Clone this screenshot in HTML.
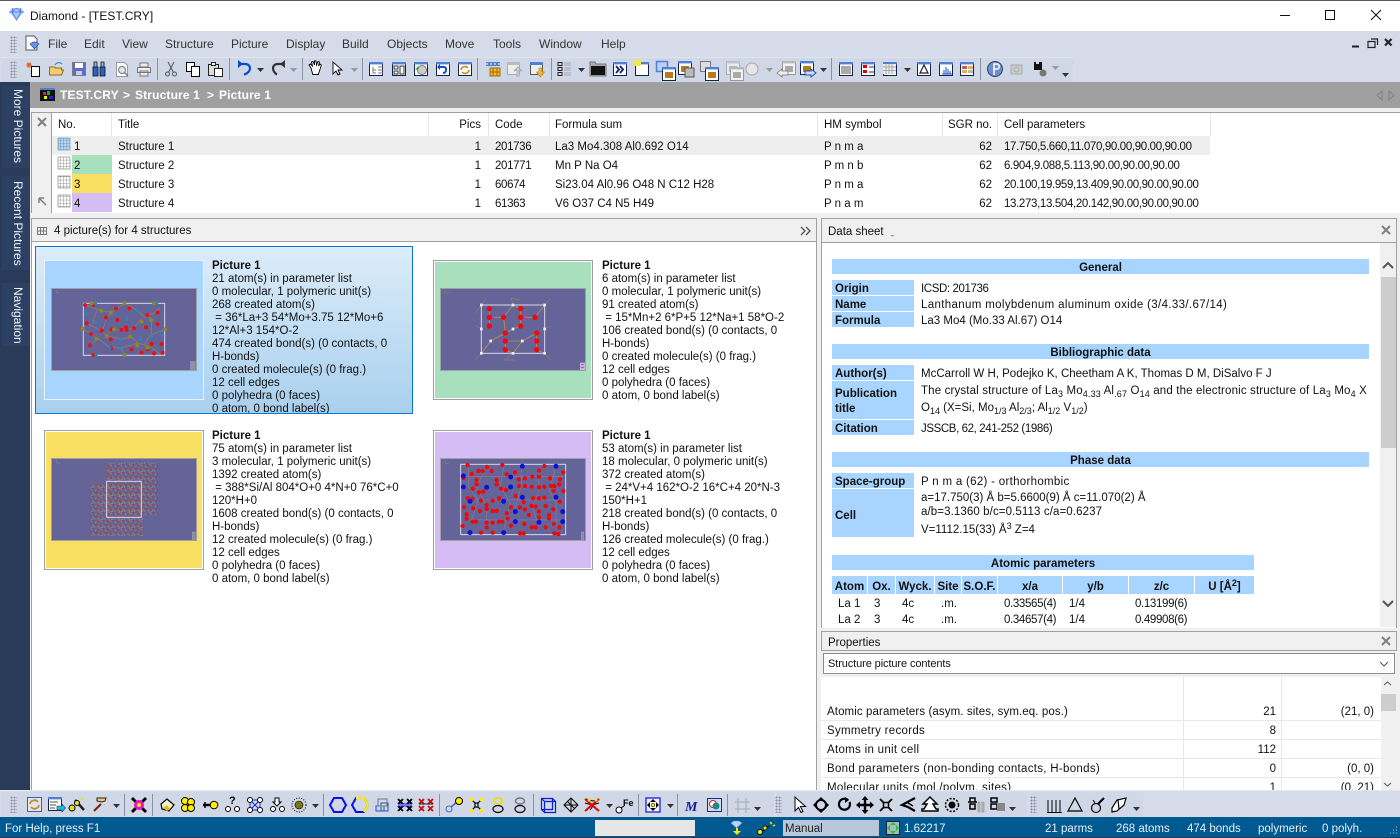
<!DOCTYPE html>
<html><head><meta charset="utf-8"><title>Diamond - [TEST.CRY]</title>
<style>
html,body{margin:0;padding:0;width:1400px;height:838px;overflow:hidden;background:#f0f0f0}
body{position:relative;font-family:"Liberation Sans",sans-serif;font-size:11.5px;color:#111}
div{position:absolute;box-sizing:border-box}
.t{white-space:pre;line-height:16px;height:16px}
.r{text-align:right}
.c{text-align:center}
.b{font-weight:bold}
.m{color:#333;font-size:12px}
.pb{color:#fff;font-size:12px;font-weight:bold;letter-spacing:.15px}
.n{letter-spacing:-.35px}
.h{background:#a8d5ff;font-weight:bold;text-align:center;line-height:18px;height:15px;white-space:pre}
.a{height:18px;line-height:22px}
.l{background:#a8d5ff;font-weight:bold;padding-left:3px;line-height:18px;height:15px;left:832px;width:82px;white-space:pre}
.d{white-space:pre;line-height:13px;padding-top:1px}
sub{font-size:9px;line-height:0;vertical-align:-3px}
sup{font-size:9px;line-height:0;vertical-align:4px}
.s{color:#e8eef5;top:821px}
.p{background:#c0c0c0}
.grip{background-image:radial-gradient(#8a8fa0 .8px,transparent .9px);background-size:3px 3px;width:7px}
svg{position:absolute;left:0;top:0;z-index:5}
</style></head><body>

<!-- title bar -->
<div style="left:0;top:0;width:1400px;height:31px;background:#fff;border-top:1px solid #5a5a5a"></div>
<div class="t" style="left:30px;top:8px;font-size:12px">Diamond - [TEST.CRY]</div>

<!-- menu + toolbar -->
<div style="left:0;top:31px;width:1400px;height:51px;background:#d5dbe9"></div>
<div style="left:2px;top:57px;width:1071px;height:25px;background:#d0d7e7;border-top:1px solid #dfe4ef"></div>
<div class="grip" style="left:10px;top:36px;height:17px"></div>
<div class="grip" style="left:10px;top:61px;height:17px"></div>
<div class="t m" style="left:48px;top:36px">File</div>
<div class="t m" style="left:84px;top:36px">Edit</div>
<div class="t m" style="left:122px;top:36px">View</div>
<div class="t m" style="left:165px;top:36px">Structure</div>
<div class="t m" style="left:231px;top:36px">Picture</div>
<div class="t m" style="left:286px;top:36px">Display</div>
<div class="t m" style="left:342px;top:36px">Build</div>
<div class="t m" style="left:387px;top:36px">Objects</div>
<div class="t m" style="left:445px;top:36px">Move</div>
<div class="t m" style="left:493px;top:36px">Tools</div>
<div class="t m" style="left:539px;top:36px">Window</div>
<div class="t m" style="left:601px;top:36px">Help</div>

<!-- path bar -->
<div style="left:30px;top:82px;width:1370px;height:26px;background:#a0a0a0"></div>
<div class="t pb" style="left:60px;top:87px">TEST.CRY</div>
<div class="t pb" style="left:123px;top:87px">&gt;</div>
<div class="t pb" style="left:135px;top:87px">Structure 1</div>
<div class="t pb" style="left:207px;top:87px">&gt;</div>
<div class="t pb" style="left:219px;top:87px">Picture 1</div>

<!-- left strip -->
<div style="left:0;top:82px;width:30px;height:709px;background:#293b58"></div>
<div style="left:2px;top:86px;width:28px;height:82px;background:#2c4063"></div>
<div style="left:2px;top:176px;width:28px;height:94px;background:#2c4063"></div>
<div style="left:2px;top:283px;width:28px;height:63px;background:#2c4063"></div>
<div style="left:11px;top:89px;width:14px;height:76px;writing-mode:vertical-rl;color:#f0f3f8;white-space:pre;line-height:14px;font-size:12px">More Pictures</div>
<div style="left:11px;top:181px;width:14px;height:88px;writing-mode:vertical-rl;color:#f0f3f8;white-space:pre;line-height:14px;font-size:12px">Recent Pictures</div>
<div style="left:11px;top:287px;width:14px;height:58px;writing-mode:vertical-rl;color:#f0f3f8;white-space:pre;line-height:14px;font-size:12px">Navigation</div>

<!-- structure table -->
<div style="left:31px;top:112px;width:1369px;height:101px;background:#fff;border-top:1px solid #a0a0a0;border-left:1px solid #a0a0a0"></div>
<div style="left:32px;top:113px;width:20px;height:100px;background:#f0f0f0;border-right:1px solid #a0a0a0"></div>
<div style="left:52px;top:136px;width:1158px;height:19px;background:#eee"></div>
<div style="left:72px;top:155px;width:40px;height:19px;background:#a8e0bd"></div>
<div style="left:72px;top:174px;width:40px;height:19px;background:#fae062"></div>
<div style="left:72px;top:193px;width:40px;height:19px;background:#d6bcf5"></div>
<div style="left:111px;top:113px;width:1px;height:23px;background:#e6e6e6"></div>
<div style="left:428px;top:113px;width:1px;height:23px;background:#e6e6e6"></div>
<div style="left:488px;top:113px;width:1px;height:23px;background:#e6e6e6"></div>
<div style="left:549px;top:113px;width:1px;height:23px;background:#e6e6e6"></div>
<div style="left:817px;top:113px;width:1px;height:23px;background:#e6e6e6"></div>
<div style="left:942px;top:113px;width:1px;height:23px;background:#e6e6e6"></div>
<div style="left:997px;top:113px;width:1px;height:23px;background:#e6e6e6"></div>
<div style="left:1210px;top:113px;width:1px;height:23px;background:#e6e6e6"></div>
<div class="t" style="left:58px;top:117px">No.</div>
<div class="t" style="left:118px;top:117px">Title</div>
<div class="t r" style="left:440px;top:117px;width:41px">Pics</div>
<div class="t" style="left:495px;top:117px">Code</div>
<div class="t" style="left:555px;top:117px">Formula sum</div>
<div class="t" style="left:824px;top:117px">HM symbol</div>
<div class="t" style="left:948px;top:117px">SGR no.</div>
<div class="t" style="left:1004px;top:117px">Cell parameters</div>

<div class="t" style="left:74px;top:139px">1</div><div class="t" style="left:118px;top:139px">Structure 1</div><div class="t r" style="left:450px;top:139px;width:31px">1</div><div class="t n" style="left:495px;top:139px">201736</div><div class="t" style="left:555px;top:139px">La3 Mo4.308 Al0.692 O14</div><div class="t" style="left:824px;top:139px">P n m a</div><div class="t r" style="left:960px;top:139px;width:32px">62</div><div class="t n" style="left:1004px;top:139px">17.750,5.660,11.070,90.00,90.00,90.00</div>
<div class="t" style="left:74px;top:158px">2</div><div class="t" style="left:118px;top:158px">Structure 2</div><div class="t r" style="left:450px;top:158px;width:31px">1</div><div class="t n" style="left:495px;top:158px">201771</div><div class="t" style="left:555px;top:158px">Mn P Na O4</div><div class="t" style="left:824px;top:158px">P m n b</div><div class="t r" style="left:960px;top:158px;width:32px">62</div><div class="t n" style="left:1004px;top:158px">6.904,9.088,5.113,90.00,90.00,90.00</div>
<div class="t" style="left:74px;top:177px">3</div><div class="t" style="left:118px;top:177px">Structure 3</div><div class="t r" style="left:450px;top:177px;width:31px">1</div><div class="t n" style="left:495px;top:177px">60674</div><div class="t" style="left:555px;top:177px">Si23.04 Al0.96 O48 N C12 H28</div><div class="t" style="left:824px;top:177px">P n m a</div><div class="t r" style="left:960px;top:177px;width:32px">62</div><div class="t n" style="left:1004px;top:177px">20.100,19.959,13.409,90.00,90.00,90.00</div>
<div class="t" style="left:74px;top:196px">4</div><div class="t" style="left:118px;top:196px">Structure 4</div><div class="t r" style="left:450px;top:196px;width:31px">1</div><div class="t n" style="left:495px;top:196px">61363</div><div class="t" style="left:555px;top:196px">V6 O37 C4 N5 H49</div><div class="t" style="left:824px;top:196px">P n a m</div><div class="t r" style="left:960px;top:196px;width:32px">62</div><div class="t n" style="left:1004px;top:196px">13.273,13.504,20.142,90.00,90.00,90.00</div>

<!-- pictures panel -->
<div style="left:31px;top:218px;width:786px;height:24px;background:#f0f0f0;border:1px solid #a0a0a0"></div>
<div class="t" style="left:54px;top:223px">4 picture(s) for 4 structures</div>
<div style="left:31px;top:242px;width:786px;height:549px;background:#fff;border-left:1px solid #a0a0a0;border-right:1px solid #a0a0a0"></div>

<div style="left:35px;top:246px;width:378px;height:168px;background:linear-gradient(#dcecf9,#a9d0ee);border:1px solid #0a78d2"></div>
<div style="left:44px;top:260px;width:160px;height:140px;background:#a8d5ff;border:1px solid #eaf2fa"></div>
<div style="left:433px;top:260px;width:160px;height:140px;background:#a8e0bd;border:1px solid #a0a0a0;outline:1px solid #fff;outline-offset:-2px"></div>
<div style="left:44px;top:430px;width:160px;height:140px;background:#fae062;border:1px solid #a0a0a0;outline:1px solid #fff;outline-offset:-2px"></div>
<div style="left:433px;top:430px;width:160px;height:140px;background:#d6bcf5;border:1px solid #a0a0a0;outline:1px solid #fff;outline-offset:-2px"></div>
<div style="left:51px;top:288px;width:146px;height:83px;background:#656498;border:1px solid #a0a0a0"></div>
<div style="left:440px;top:288px;width:146px;height:83px;background:#656498;border:1px solid #a0a0a0"></div>
<div style="left:51px;top:458px;width:146px;height:83px;background:#656498;border:1px solid #a0a0a0"></div>
<div style="left:440px;top:458px;width:146px;height:83px;background:#656498;border:1px solid #a0a0a0"></div>

<div class="d" style="left:212px;top:259px;height:154px;overflow:hidden"><b>Picture 1</b>
21 atom(s) in parameter list
0 molecular, 1 polymeric unit(s)
268 created atom(s)
 = 36*La+3 54*Mo+3.75 12*Mo+6
12*Al+3 154*O-2
474 created bond(s) (0 contacts, 0
H-bonds)
0 created molecule(s) (0 frag.)
12 cell edges
0 polyhedra (0 faces)
0 atom, 0 bond label(s)</div>
<div class="d" style="left:602px;top:259px"><b>Picture 1</b>
6 atom(s) in parameter list
0 molecular, 1 polymeric unit(s)
91 created atom(s)
 = 15*Mn+2 6*P+5 12*Na+1 58*O-2
106 created bond(s) (0 contacts, 0
H-bonds)
0 created molecule(s) (0 frag.)
12 cell edges
0 polyhedra (0 faces)
0 atom, 0 bond label(s)</div>
<div class="d" style="left:212px;top:429px"><b>Picture 1</b>
75 atom(s) in parameter list
3 molecular, 1 polymeric unit(s)
1392 created atom(s)
 = 388*Si/Al 804*O+0 4*N+0 76*C+0
120*H+0
1608 created bond(s) (0 contacts, 0
H-bonds)
12 created molecule(s) (0 frag.)
12 cell edges
0 polyhedra (0 faces)
0 atom, 0 bond label(s)</div>
<div class="d" style="left:602px;top:429px"><b>Picture 1</b>
53 atom(s) in parameter list
18 molecular, 0 polymeric unit(s)
372 created atom(s)
 = 24*V+4 162*O-2 16*C+4 20*N-3
150*H+1
218 created bond(s) (0 contacts, 0
H-bonds)
126 created molecule(s) (0 frag.)
12 cell edges
0 polyhedra (0 faces)
0 atom, 0 bond label(s)</div>

<!-- data sheet -->
<div style="left:821px;top:218px;width:576px;height:410px;background:#fff;border:1px solid #a0a0a0;border-bottom:0"></div>
<div style="left:821px;top:218px;width:576px;height:25px;background:#f0f0f0;border:1px solid #a0a0a0"></div>
<div class="t" style="left:828px;top:224px">Data sheet</div>
<div class="h" style="left:832px;top:259px;width:537px">General</div>
<div class="l" style="top:280px">Origin</div><div class="t" style="left:921px;top:281px;letter-spacing:-.4px">ICSD: 201736</div>
<div class="l" style="top:296px">Name</div><div class="t" style="left:921px;top:297px;letter-spacing:.35px">Lanthanum molybdenum aluminum oxide (3/4.33/.67/14)</div>
<div class="l" style="top:312px">Formula</div><div class="t" style="left:921px;top:313px">La3 Mo4 (Mo.33 Al.67) O14</div>
<div class="h" style="left:832px;top:344px;width:537px">Bibliographic data</div>
<div class="l" style="top:365px">Author(s)</div><div class="t" style="left:921px;top:366px">McCarroll W H, Podejko K, Cheetham A K, Thomas D M, DiSalvo F J</div>
<div class="l" style="top:381px;height:38px;line-height:15px;padding-top:6px">Publication
title</div>
<div class="t" style="left:921px;top:383px;letter-spacing:.15px">The crystal structure of La<sub>3</sub> Mo<sub>4.33</sub> Al<sub>.67</sub> O<sub>14</sub> and the electronic structure of La<sub>3</sub> Mo<sub>4</sub> X</div>
<div class="t" style="left:921px;top:400px">O<sub>14</sub> (X=Si, Mo<sub>1/3</sub> Al<sub>2/3</sub>; Al<sub>1/2</sub> V<sub>1/2</sub>)</div>
<div class="l" style="top:420px">Citation</div><div class="t" style="left:921px;top:421px;letter-spacing:-.4px">JSSCB, 62, 241-252 (1986)</div>
<div class="h" style="left:832px;top:452px;width:537px">Phase data</div>
<div class="l" style="top:473px">Space-group</div><div class="t" style="left:921px;top:474px;letter-spacing:.3px">P n m a (62) - orthorhombic</div>
<div class="l" style="top:489px;height:48px;line-height:54px">Cell</div>
<div class="t" style="left:921px;top:490px">a=17.750(3) Å b=5.6600(9) Å c=11.070(2) Å</div>
<div class="t" style="left:921px;top:504px;letter-spacing:.1px">a/b=3.1360 b/c=0.5113 c/a=0.6237</div>
<div class="t" style="left:921px;top:522px">V=1112.15(33) Å<sup>3</sup> Z=4</div>
<div class="h" style="left:832px;top:555px;width:422px">Atomic parameters</div>
<div class="h a" style="left:832px;top:576px;width:35px">Atom</div>
<div class="h a" style="left:868px;top:576px;width:27px">Ox.</div>
<div class="h a" style="left:896px;top:576px;width:38px">Wyck.</div>
<div class="h a" style="left:935px;top:576px;width:26px">Site</div>
<div class="h a" style="left:962px;top:576px;width:35px">S.O.F.</div>
<div class="h a" style="left:998px;top:576px;width:64px">x/a</div>
<div class="h a" style="left:1063px;top:576px;width:65px">y/b</div>
<div class="h a" style="left:1129px;top:576px;width:65px">z/c</div>
<div class="h a" style="left:1195px;top:576px;width:59px">U [Å<sup>2</sup>]</div>
<div class="t" style="left:838px;top:596px">La 1</div><div class="t" style="left:874px;top:596px">3</div><div class="t" style="left:902px;top:596px">4c</div><div class="t" style="left:941px;top:596px">.m.</div><div class="t n" style="left:1004px;top:596px">0.33565(4)</div><div class="t" style="left:1069px;top:596px">1/4</div><div class="t n" style="left:1135px;top:596px">0.13199(6)</div>
<div class="t" style="left:838px;top:612px">La 2</div><div class="t" style="left:874px;top:612px">3</div><div class="t" style="left:902px;top:612px">4c</div><div class="t" style="left:941px;top:612px">.m.</div><div class="t n" style="left:1004px;top:612px">0.34657(4)</div><div class="t" style="left:1069px;top:612px">1/4</div><div class="t n" style="left:1135px;top:612px">0.49908(6)</div>
<div style="left:1380px;top:243px;width:16px;height:384px;background:#f0f0f0"></div>
<div style="left:1381px;top:277px;width:15px;height:171px;background:#cdcdcd"></div>

<!-- properties -->
<div style="left:821px;top:628px;width:579px;height:163px;background:#f0f0f0"></div>
<div style="left:821px;top:631px;width:576px;height:20px;background:#f0f0f0;border:1px solid #a0a0a0"></div>
<div class="t" style="left:828px;top:635px">Properties</div>
<div style="left:823px;top:653px;width:572px;height:21px;background:#fff;border:1px solid #8c8c8c"></div>
<div class="t" style="left:828px;top:656px;font-size:11px;letter-spacing:-.1px">Structure picture contents</div>
<div style="left:821px;top:677px;width:560px;height:113px;background:#fff;overflow:hidden">
<div style="left:362px;top:0;width:1px;height:113px;background:#e8e8e8"></div>
<div style="left:460px;top:0;width:1px;height:113px;background:#e8e8e8"></div>
<div style="left:0;top:43px;width:560px;height:1px;background:#e8e8e8"></div>
<div style="left:0;top:62px;width:560px;height:1px;background:#e8e8e8"></div>
<div style="left:0;top:81px;width:560px;height:1px;background:#e8e8e8"></div>
<div style="left:0;top:100px;width:560px;height:1px;background:#e8e8e8"></div>
<div class="t" style="left:6px;top:27px;letter-spacing:.1px">Atomic parameters (asym. sites, sym.eq. pos.)</div><div class="t r" style="left:400px;top:27px;width:55px">21</div><div class="t r" style="left:498px;top:27px;width:55px">(21, 0)</div>
<div class="t" style="left:6px;top:46px;letter-spacing:.3px">Symmetry records</div><div class="t r" style="left:400px;top:46px;width:55px">8</div>
<div class="t" style="left:6px;top:65px;letter-spacing:.3px">Atoms in unit cell</div><div class="t r" style="left:400px;top:65px;width:55px">112</div>
<div class="t" style="left:6px;top:84px;letter-spacing:.3px">Bond parameters (non-bonding contacts, H-bonds)</div><div class="t r" style="left:400px;top:84px;width:55px">0</div><div class="t r" style="left:498px;top:84px;width:55px">(0, 0)</div>
<div class="t" style="left:6px;top:103px;letter-spacing:.3px">Molecular units (mol./polym. sites)</div><div class="t r" style="left:400px;top:103px;width:55px">1</div><div class="t r" style="left:498px;top:103px;width:55px">(0, 21)</div>
</div>
<div style="left:1381px;top:677px;width:15px;height:113px;background:#f0f0f0"></div>
<div style="left:1381px;top:694px;width:15px;height:17px;background:#cdcdcd"></div>

<!-- bottom toolbars -->
<div style="left:0;top:790px;width:1400px;height:27px;background:#d5dbe9;border-top:1px solid #e4e8f0"></div>
<div style="left:2px;top:792px;width:772px;height:25px;background:#d0d7e7"></div>
<div style="left:777px;top:792px;width:250px;height:25px;background:#d0d7e7"></div>
<div style="left:1030px;top:792px;width:113px;height:25px;background:#d0d7e7"></div>
<div class="grip" style="left:10px;top:796px;height:17px"></div>
<div class="grip" style="left:775px;top:796px;height:17px"></div>
<div class="grip" style="left:1030px;top:796px;height:17px"></div>

<!-- status bar -->
<div style="left:0;top:817px;width:1400px;height:21px;background:#005a92;border-bottom:1px solid #2a3a4a"></div>
<div class="t s" style="left:5px">For Help, press F1</div>
<div style="left:595px;top:820px;width:100px;height:16px;background:#e6e6e6"></div>
<div style="left:783px;top:820px;width:96px;height:16px;background:#b9c7da"></div>
<div class="t" style="left:785px;top:821px;color:#222">Manual</div>
<div class="t s" style="left:904px">1.62217</div>
<div class="t s" style="left:1045px">21 parms</div>
<div class="t s" style="left:1116px">268 atoms</div>
<div class="t s" style="left:1187px">474 bonds</div>
<div class="t s" style="left:1258px">polymeric</div>
<div class="t s" style="left:1322px">0 polyh.</div>

<svg width="1400" height="838" viewBox="0 0 1400 838" fill="none">
<defs>
<pattern id="gr" width="3.33" height="3.33" patternUnits="userSpaceOnUse"><path d="M0 0h3.33M0 0v3.33" stroke="#777" stroke-width=".8"/></pattern>
<pattern id="grb" width="3.33" height="3.33" patternUnits="userSpaceOnUse"><path d="M0 0h3.33M0 0v3.33" stroke="#5a86b8" stroke-width=".8"/></pattern>
<pattern id="s3" width="30" height="24" patternUnits="userSpaceOnUse">
<path d="M3 4h0M18 2h0M10 14h0M24 17h0" stroke="#d8281e" stroke-width="4.600" stroke-linecap="round"/>
<path d="M9 5h0M25 7h0M3 16h0M17 19h0" stroke="#989030" stroke-width="4.600" stroke-linecap="round"/>
<path d="M14 9h0M28 12h0M6 10h0" stroke="#c0a48e" stroke-width="3" stroke-linecap="round"/>
</pattern>
<g id="dn"><path d="M0 0h7l-3.500 4z" fill="#333"/></g>
<g id="dg"><path d="M0 0h7l-3.500 4z" fill="#999"/></g>
<g id="win"><rect x="1.500" y="1.500" width="13" height="13" fill="#fff" stroke="#14224e"/><rect x="1" y="1" width="14" height="2.400" fill="#4f80d4"/></g>
<g id="wim"><rect x="1.500" y="1.500" width="13" height="13" fill="#fff" stroke="#14224e"/><rect x="1" y="1" width="14" height="2.400" fill="#4f80d4"/><rect x="4" y="6" width="8" height="6" fill="#b87a20"/></g>
<g id="wgr"><rect x="1.500" y="1.500" width="13" height="13" fill="#f4f4f4" stroke="#999"/><rect x="1" y="1" width="14" height="2.400" fill="#b8b8b8"/><rect x="4" y="6" width="8" height="6" fill="#aaa"/></g>
<g id="yc"><circle cx="4" cy="4" r="3.500" fill="#ffee00" stroke="#000"/></g>
<g id="wc"><circle cx="3" cy="3" r="2.500" fill="#fff" stroke="#000"/></g>
</defs>

<!-- title icon & buttons -->
<path d="M9 12l3-4h9l3 4-7.500 8z" fill="#a9c9f5"/><path d="M9 12h15M13 8l-1 4 4.500 8 4.500-8-1-4M16.500 8l-4.500 4M16.500 8l4.500 4" stroke="#4a72d8" stroke-width=".8"/>
<path d="M1280 15.500h10" stroke="#111"/><rect x="1325.500" y="10.500" width="9" height="9" stroke="#111"/><path d="M1371 10l10 10M1381 10l-10 10" stroke="#111"/>
<path d="M1352 46.500h7" stroke="#222" stroke-width="2"/><path d="M1368 41.500h7v6h-7zM1371 39h6.500v6" stroke="#222" stroke-width="1.200"/><path d="M1385 39l6.500 6.500M1391.500 39l-6.500 6.500" stroke="#222" stroke-width="2.200"/>

<!-- menu doc icon -->
<path d="M26 36h8l3 3v11H26z" fill="#fff" stroke="#555"/><path d="M30 44l3-2h3l3 2-4.500 5z" fill="#6e92e0" stroke="#2b54b8" stroke-width=".7"/>

<!-- row 1 icons -->
<g id="row1">
<g transform="translate(25,61)"><rect x="6.500" y="5.500" width="8" height="10" fill="#fff" stroke="#000"/><path d="M4 1v6M1 4h6M2 2l4 4M6 2L2 6" stroke="#e0601c"/></g>
<g transform="translate(48,61)"><path d="M1.500 14V6h5l1 1h6v2h2l-2 5z" fill="#f3cd6d" stroke="#8c6c24"/><path d="M7 4c2-3 5-3 7-1" stroke="#3b7bd8"/></g>
<g transform="translate(71,61)"><rect x="1.500" y="1.500" width="13" height="13" fill="#5d6cc6" stroke="#7b7b88"/><rect x="4" y="2" width="8" height="5" fill="#fff"/><rect x="5" y="10" width="6" height="4" fill="#c9cce0"/></g>
<g transform="translate(91,61)"><path d="M2 6h5v9H2zM9 6h5v9H9z" fill="#2c62c8" stroke="#111" stroke-width=".8"/><path d="M3 1h3v5H3zM10 1h3v5h-3z" fill="#8cb0e8" stroke="#111" stroke-width=".8"/></g>
<g transform="translate(114,61)"><path d="M2.500 1.500h8l3 3v11h-11z" fill="#fff" stroke="#999"/><circle cx="8" cy="9" r="3.500" fill="#dfe7ee" stroke="#777"/><path d="M10.500 11.500l3.500 3.500" stroke="#777" stroke-width="1.500"/></g>
<g transform="translate(136,61)"><path d="M4 2h8v4H4zM1.500 6.500h13v5h-13zM4 10h8v5H4z" fill="#eee" stroke="#777"/></g>
<path d="M157.500 58v22" stroke="#8a93a6"/>
<g transform="translate(163,61)"><circle cx="4.500" cy="13" r="2" stroke="#555"/><circle cx="11.500" cy="13" r="2" stroke="#555"/><path d="M5.500 11.500L11 1M10.500 11.500L5 1" stroke="#555"/></g>
<g transform="translate(185,61)"><rect x="1.500" y="1.500" width="8" height="9" fill="#fff" stroke="#000"/><rect x="6.500" y="5.500" width="8" height="10" fill="#fff" stroke="#000"/></g>
<g transform="translate(207,61)"><rect x="1.500" y="3.500" width="10" height="11" fill="#ddd" stroke="#222"/><rect x="4.500" y="1.500" width="4" height="3" fill="#fff" stroke="#222"/><rect x="7.500" y="7.500" width="8" height="8" fill="#fff" stroke="#222"/></g>
<path d="M229.500 58v22" stroke="#8a93a6"/>
<path d="M238 64h7c4 0 5 2.500 5 4.500s-2 5-6 6" stroke="#0a4cd0" stroke-width="2.200"/><path d="M238 60v8l5-4z" fill="#0a4cd0"/>
<use href="#dn" x="257" y="68"/>
<path d="M284 64h-6c-4 0-5 2.500-5 4.500s2 5 4 6" stroke="#333" stroke-width="2.200"/><path d="M285 60v8l-5-4z" fill="#333"/>
<use href="#dg" x="290" y="68"/>
<path d="M302.500 58v22" stroke="#8a93a6"/>
<path d="M311 68l-2-3 1.500-1 2 2-1-4 1.500-.5 1.500 3.500V61h1.500l.5 4 1.500-3.500 1.500.5-1 4 1.500-2 1.300 1-1.500 5-1.500 4.500h-5.500z" fill="#fff" stroke="#000" stroke-width=".9"/>
<path d="M333 62v12l3-3 2 4 2-1-2-4h4z" fill="#fff" stroke="#000" stroke-width=".9"/>
<use href="#dg" x="351" y="68"/>
<path d="M362.500 58v22" stroke="#8a93a6"/>
<use href="#win" x="368" y="61"/><path d="M373 67v6h3M373 70h3M378 67h5M378 70h5M378 73h5" stroke="#777"/>
<use href="#win" x="391" y="61"/><path d="M394 66h4v3h-4zM394 71h4v3h-4zM400 66h4v8h-4z" stroke="#333"/>
<use href="#win" x="413" y="61"/><circle cx="422" cy="70" r="4.500" fill="#ccc" stroke="#777"/><path d="M415 70l3-4 1 3z" fill="#2eaa30"/>
<use href="#win" x="435" y="61"/><path d="M439 67h5c3 0 3 6-1 6" stroke="#0a4cd0" stroke-width="2"/><path d="M440 64v6l-3-3z" fill="#0a4cd0"/>
<use href="#win" x="457" y="61"/><path d="M461 70a4 4 0 0 1 7-2M469 70a4 4 0 0 1-7 2" stroke="#c88a20" stroke-width="1.600"/>
<path d="M477.500 58v22" stroke="#8a93a6"/>
<g transform="translate(485,61)"><path d="M1 1h14v4H1z" fill="#4f80d4"/><path d="M1 3h14" stroke="#fff" stroke-dasharray="2 2"/><rect x="5" y="7" width="10" height="8" fill="#f2b92c" stroke="#a06c10"/><path d="M8 7v8M12 7v8M5 11h10" stroke="#a06c10"/></g>
<g transform="translate(506,61)"><rect x="1.500" y="1.500" width="12" height="12" fill="#eee" stroke="#aaa"/><rect x="1" y="1" width="13" height="3" fill="#bbb"/><path d="M11 15V9l-3 1 4-4 4 4-3-1v6z" fill="#ddd" stroke="#aaa"/></g>
<g transform="translate(529,61)"><rect x="1.500" y="1.500" width="12" height="12" fill="#eee" stroke="#555"/><rect x="1" y="1" width="13" height="3" fill="#4f80d4"/><path d="M10 7h3v4h2.500l-4 5-4-5H10z" fill="#f2b92c" stroke="#b98410" stroke-width=".6"/></g>
<path d="M551.500 58v22" stroke="#8a93a6"/>
<path d="M558 62.500h4v3h-4zM558 67.500h4v3h-4zM558 72.500h4v3h-4z" stroke="#222"/><path d="M564 63h7M564 65h7M564 68h7M564 70h7M564 73h7M564 75h7" stroke="#aaa"/>
<use href="#dn" x="578" y="68"/>
<path d="M590 62h5l1 2h10v12h-16z" fill="#aaa" stroke="#777"/><rect x="591" y="66" width="14" height="9" fill="#111"/>
<use href="#win" x="612" y="61"/><path d="M616 66l3 3.500-3 3.500M620 66l3 3.500-3 3.500" stroke="#1a2a6e" stroke-width="2"/>
<use href="#win" x="634" y="61"/><rect x="634" y="60" width="7" height="6" fill="#f2e64e"/>
<rect x="656.500" y="61.500" width="11" height="10" fill="#b8d0f8" stroke="#4f80d4" stroke-width="1.500"/><use href="#wim" x="661" y="66"/>
<use href="#wim" x="677" y="60"/><rect x="685" y="68" width="9" height="9" fill="#bbb" stroke="#555"/>
<rect x="700.500" y="61.500" width="10" height="10" fill="#ddd" stroke="#777"/><use href="#wim" x="704" y="66"/>
<use href="#wgr" x="725" y="60" opacity=".7"/><use href="#wgr" x="729" y="66"/>
<circle cx="752" cy="69" r="6" fill="#e6e6e6" stroke="#aaa"/><use href="#dg" x="766" y="68"/>
<use href="#wgr" x="781" y="60"/><path d="M777 73l5-4v2h6v4h-6v2z" fill="#eee" stroke="#777" stroke-width=".8"/>
<use href="#wim" x="799" y="60"/><path d="M816 73l-5-4v2h-6v4h6v2z" fill="#cfe0fa" stroke="#1a4cc0"/>
<use href="#dn" x="820" y="68"/>
<path d="M831.500 58v22" stroke="#8a93a6"/>
<use href="#win" x="838" y="61"/><path d="M841 67h10M841 69h10M841 71h10M841 73h10" stroke="#555"/>
<use href="#win" x="860" y="61"/><path d="M863 66.500h4M863 71.500h4" stroke="#d00" stroke-width="3"/><path d="M869 67h5M869 72h5" stroke="#333"/>
<use href="#win" x="882" y="61"/><rect x="883" y="64" width="13" height="10" fill="#eee"/><path d="M886 64v10M889 64v10M892 64v10M883 67h13M883 70.500h13" stroke="#aaa"/>
<use href="#dn" x="904" y="68"/>
<use href="#win" x="916" y="61"/><path d="M924 65l-4 8h8z" stroke="#222" stroke-width="1.200"/>
<use href="#win" x="938" y="61"/><path d="M942 74h10M944 74v-4M946 74v-7M948 74v-5M950 74v-3" stroke="#1a4cc0"/>
<use href="#win" x="959" y="61"/><path d="M962 66h5v3h-5z" fill="#c55"/><path d="M968 66h5v3h-5zM962 70h5v3h-5z" fill="#e8b04a"/><path d="M968 70h5v3h-5z" fill="#bbb"/>
<path d="M980.500 58v22" stroke="#8a93a6"/>
<circle cx="995" cy="69" r="7.500" fill="#6e8ed0" stroke="#345"/><path d="M994 75V64h3c3 0 3 5 0 5h-3" stroke="#fff" stroke-width="1.500"/>
<rect x="1011" y="65" width="11" height="9" fill="#ccc" stroke="#aaa"/><circle cx="1016.500" cy="69.500" r="2.500" stroke="#aaa"/>
<path d="M1034 62h2v2h3v-2h3v8h-8z" fill="#111"/><circle cx="1043" cy="73" r="3.500" fill="#777"/>
<use href="#dg" x="1052" y="66"/><use href="#dn" x="1062" y="73"/>
</g>

<!-- path icon + arrows -->
<rect x="40" y="88" width="15" height="13" fill="#111"/><rect x="40" y="88" width="15" height="2" fill="#4f80d4"/><path d="M43 92h3v3h-3z" fill="#d22"/><path d="M47 91h3v4h-3z" fill="#2a2"/><path d="M44 96h3v3h-3z" fill="#ee2"/><path d="M49 96h4v3h-4z" fill="#22c"/>
<path d="M1382 91l-5 4.500 5 4.500zM1389 91l5 4.500-5 4.500z" stroke="#808080"/>

<!-- table icons -->
<rect x="58" y="138" width="12" height="12" fill="#b8d2ee"/><rect x="58" y="138" width="12" height="12" fill="url(#grb)" stroke="#5a86b8" stroke-width=".6"/>
<rect x="58" y="157" width="12" height="12" fill="#fff"/><rect x="58" y="157" width="12" height="12" fill="url(#gr)" stroke="#777" stroke-width=".6"/>
<rect x="58" y="176" width="12" height="12" fill="#fff"/><rect x="58" y="176" width="12" height="12" fill="url(#gr)" stroke="#777" stroke-width=".6"/>
<rect x="58" y="195" width="12" height="12" fill="#fff"/><rect x="58" y="195" width="12" height="12" fill="url(#gr)" stroke="#777" stroke-width=".6"/>
<path d="M38 118l8 8M46 118l-8 8" stroke="#808080" stroke-width="2"/>
<path d="M39 198l7 7M39 198h5M39 198v5" stroke="#808080" stroke-width="1.500"/>
<path d="M37.500 227.500h9v7h-9zM37.500 231h9M40.500 227.500v7M43.500 227.500v7" stroke="#777"/>
<path d="M801 227l4 4-4 4M806 227l4 4-4 4" stroke="#555" stroke-width="1.300"/>
<path d="M890 235h5l-2.500 2z" fill="#aaa"/>
<path d="M1382 226l8 8M1390 226l-8 8" stroke="#808080" stroke-width="2"/>
<path d="M1382 637l8 8M1390 637l-8 8" stroke="#808080" stroke-width="2"/>
<path d="M1383 268l5-5 5 5" stroke="#555" stroke-width="2"/>
<path d="M1383 601l5 5 5-5" stroke="#555" stroke-width="2"/>
<path d="M1384 685l3.500-3 3.500 3M1384 783l3.500 3 3.500-3" stroke="#555"/>
<path d="M1380 662l4 4 4-4" stroke="#555"/>

<!-- picture 1 -->
<g transform="translate(30,240) scale(.3333)">
<path d="M80 150v9h9" stroke="#7d7ca8" stroke-width="2"/>
<rect x="160" y="190" width="244" height="156" stroke="#d8d8ec" stroke-width="3"/>
<path d="M165 195l48 17 32 4 40-26 38 22 20 20 30-14 18-15M170 250l45 22 15 15 15-18 40 1 25-5 22-27M230 288l45 8 30-4 18 16 42 15 32 25M180 316l25-20 32 25 38 3 48-15M155 265l28 17 18 16M405 268l-45 18-18 30M283 345l-10-22M200 212l-12 38M245 218l-15 15-12 38M350 225l15 15-2 45" stroke="#b89052" stroke-width="1.800" opacity=".7"/>
<path d="M165 195h0M190 195h0M258 205h0M298 205h0M352 225h0M383 218h0M228 232h0M262 240h0M170 250h0M215 272h0M183 282h0M275 270h0M288 262h0M290 270h0M312 265h0M348 262h0M383 252h0M242 298h0M180 316h0M244 325h0M305 328h0M335 338h0M398 338h0M372 340h0M190 345h0M395 312h0M365 312h0M352 328h0M245 268h0" stroke="#e81010" stroke-width="12" stroke-linecap="round"/>
<path d="M185 190h0M213 212h0M243 218h0M283 190h0M335 245h0M363 240h0M158 267h0M405 268h0M200 297h0M230 288h0M252 268h0M322 316h0M352 323h0M283 345h0M372 190h0M300 290h0" stroke="#8e8a1e" stroke-width="12" stroke-linecap="round"/>
<path d="M197 192h0M168 222h0M198 247h0M322 212h0M290 238h0M365 288h0M395 285h0M272 298h0M240 325h0M198 345h0M270 325h0M332 298h0M380 190h0" stroke="#1a8cc8" stroke-width="9" stroke-linecap="round"/>
<rect x="480" y="363" width="17" height="27" fill="#8f8fa8"/>
</g>

<!-- picture 2 -->
<g transform="translate(425,250) scale(.3333)">
<path d="M60 117v12h12" stroke="#7d7ca8" stroke-width="2"/>
<rect x="169" y="165" width="190" height="145" stroke="#d8d8ec" stroke-width="3"/>
<path d="M150 190l19-25 15-20M150 330l19-20 15-20M359 165l18-20M359 310l18 20M169 237l-17-10M359 237l17-10M264 165l-5-20 25 5M264 310l-25 20 30 0" stroke="#b89052" stroke-width="2" opacity=".6"/>
<path d="M193 176v52M193 202h43M236 202l28-37 23 11M287 202h43M287 176v52M236 202l5 47-44 24-28 37M241 249l23-12 23-9M241 273h51M292 273l43-24M292 273l-28 37M335 249v50M330 202l29-37M241 273v26M241 299l23 11M335 299l24 11" stroke="#c09048" stroke-width="2.500"/>
<path d="M193 176h0M193 202h0M193 228h0M236 202h0M287 176h0M287 202h0M287 228h0M330 202h0M241 249h0M241 273h0M241 299h0M335 249h0M335 273h0M335 299h0" stroke="#f00808" stroke-width="16" stroke-linecap="round"/>
<path d="M204 202h0M298 202h0M230 273h0M325 273h0" stroke="#e820d0" stroke-width="7" stroke-linecap="round"/>
<path d="M169 165h0M264 165h0M359 165h0M169 237h0M264 237h0M359 237h0M197 273h0M292 273h0M169 310h0M264 310h0M359 310h0" stroke="#eee" stroke-width="8" stroke-linecap="square"/>
<rect x="465" y="338" width="15" height="22" fill="#c4b8d8"/><path d="M469 344h7M469 352h7" stroke="#b030b0" stroke-width="3"/>
</g>

<!-- picture 3 -->
<g transform="translate(30,420) scale(.3333)">
<path d="M80 117v12h12" stroke="#7d7ca8" stroke-width="2"/>
<rect x="228" y="128" width="156" height="160" fill="url(#s3)"/>
<rect x="182" y="190" width="156" height="158" fill="url(#s3)"/>
<rect x="230" y="184" width="104" height="108" stroke="#d8d8ec" stroke-width="3"/>
<rect x="486" y="335" width="11" height="26" fill="#8f8fa8"/>
</g>

<!-- picture 4 -->
<g transform="translate(425,250) scale(.3333)">
<path d="M60 628v12h12" stroke="#7d7ca8" stroke-width="2"/>
<rect x="107" y="643" width="315" height="211" stroke="#d8d8ec" stroke-width="3"/>
<path d="M130 650v60l30 40-20 60M185 650l-30 60 30 60v60M236 650l-10 60 30 50-20 80M290 650v50l-20 80M342 660v60l-20 50 20 60M393 650l-20 70 20 40v70M115 680h300M115 750h300M130 810h290" stroke="#b7a68c" stroke-width="2" opacity=".4"/>
<path d="M128 645h0M140 672h0M115 684h0M160 663h0M173 663h0M186 651h0M200 663h0M232 645h0M245 673h0M270 667h0M281 688h0M300 685h0M322 680h0M342 662h0M342 680h0M358 648h0M375 685h0M405 688h0M415 667h0M155 690h0M155 703h0M215 690h0M215 703h0M143 716h0M175 725h0M162 727h0M228 716h0M243 720h0M282 708h0M300 708h0M320 710h0M342 712h0M358 710h0M378 708h0M388 708h0M403 703h0M415 723h0M128 745h0M142 747h0M168 752h0M203 752h0M185 765h0M185 777h0M258 772h0M222 745h0M272 738h0M296 756h0M325 745h0M342 745h0M358 743h0M386 723h0M405 755h0M117 772h0M145 775h0M165 783h0M203 783h0M215 783h0M245 790h0M125 793h0M125 806h0M113 828h0M143 815h0M153 815h0M185 818h0M185 833h0M203 818h0M222 815h0M232 815h0M248 806h0M258 827h0M300 778h0M320 768h0M332 770h0M342 785h0M362 768h0M385 778h0M372 795h0M285 772h0M312 795h0M372 805h0M298 822h0M320 832h0M332 832h0M342 802h0M362 832h0M387 822h0M403 832h0M168 848h0M203 848h0M285 850h0M296 850h0M388 850h0M400 852h0" stroke="#f00808" stroke-width="13" stroke-linecap="round"/>
<path d="M292 649h0M393 649h0M115 678h0M257 681h0M115 711h0M185 712h0M257 711h0M135 754h0M236 754h0M292 742h0M393 742h0M271 785h0M413 785h0M271 815h0M342 817h0M413 815h0M135 848h0M236 848h0" stroke="#0a10d8" stroke-width="15" stroke-linecap="round"/>
<rect x="468" y="845" width="9" height="25" fill="#8f8fa8"/>
</g>

<!-- bottom toolbar icons -->
<g>
<rect x="27.500" y="797.500" width="14" height="14" fill="#dfe6f2" stroke="#3a62b0"/><path d="M30 804a4.500 4.500 0 0 1 8-2M39 805a4.500 4.500 0 0 1-8 2" stroke="#c88a20" stroke-width="1.800"/>
<use href="#win" x="47" y="796"/><path d="M50 802h8M50 805h6M50 808h5" stroke="#555"/><path d="M57 806h5v-2l3.500 4-3.500 4v-2h-5z" fill="#28b8d8" stroke="#146" stroke-width=".6"/>
<path d="M75 800l9 10" stroke="#222" stroke-width="2.500"/><circle cx="72" cy="808" r="3" fill="#e8e020" stroke="#000"/><circle cx="77" cy="803" r="2.500" fill="#e8e020" stroke="#000"/><path d="M81 798l2 2" stroke="#e8e020" stroke-width="2"/>
<path d="M94 811l7-7" stroke="#7a2010" stroke-width="2"/><path d="M97 798h9l-1 3 -3 1 -5-1z" fill="#f0c878" stroke="#222"/>
<use href="#dn" x="113" y="804"/>
<path d="M124.500 794v22" stroke="#8a93a6"/>
<path d="M132 798l14 14M146 798l-14 14" stroke="#000" stroke-width="3"/><circle cx="139" cy="805" r="4.500" fill="#ee10c0" stroke="#ee10c0"/><circle cx="139" cy="805" r="2" fill="#ffee00"/>
<path d="M152.500 794v22" stroke="#8a93a6"/>
<path d="M161 804l6-5 7 6-5 6-7-2z" fill="#f0f0d0" stroke="#000" stroke-width="1.200"/><path d="M163 808l4-3 3 4-3 2z" fill="#d8c020"/>
<use href="#yc" x="181" y="797"/><use href="#yc" x="187" y="798"/><use href="#yc" x="181" y="804"/><use href="#yc" x="187" y="804"/>
<path d="M203 805h8" stroke="#000" stroke-width="2.500"/><circle cx="214" cy="805" r="3.800" fill="#ffee00" stroke="#000"/><path d="M205 802v6" stroke="#000" stroke-width="1.500"/>
<text x="229" y="804" font-family="Liberation Sans" font-weight="bold" font-size="11" fill="#000">?</text><use href="#wc" x="225" y="806"/><use href="#wc" x="234" y="806"/>
<path d="M250 800h10v10h-10zM250 800l10 10M260 800l-10 10" stroke="#1030d0"/><use href="#wc" x="247" y="797"/><use href="#wc" x="257" y="797"/><use href="#wc" x="247" y="807"/><use href="#wc" x="257" y="807"/>
<path d="M275 798h4v4h2l-4 4-4-4h2z" fill="#fff" stroke="#000"/><use href="#wc" x="270" y="806"/><use href="#wc" x="279" y="806"/>
<circle cx="299" cy="805" r="7" stroke="#000" stroke-dasharray="1 1.500"/><circle cx="299" cy="805" r="4" fill="#78780e" stroke="#000" stroke-width=".6"/>
<use href="#dn" x="312" y="804"/>
<path d="M323.500 794v22" stroke="#8a93a6"/>
<path d="M334 798h8l4 7-4 7h-8l-4-7z" stroke="#0a10e0" stroke-width="2"/>
<path d="M356 798h8l4 7-4 7h-8l-4-7z" stroke="#0a10e0" stroke-width="2"/><path d="M356 798h8l4 7-4 7" stroke="#ffee00" stroke-width="2"/>
<path d="M378 799h9v7h-9zM381 803h7v8h-7zM376 806h8v5h-8z" stroke="#2050c0"/><path d="M378 799h9v7h-9z" stroke="#777"/>
<path d="M398 799l5 5M403 799l-5 5M407 799l5 5M412 799l-5 5M398 806l5 5M403 806l-5 5M407 806l5 5M412 806l-5 5" stroke="#000" stroke-width="1.800"/><path d="M398 804h14M398 806h14" stroke="#0a10e0"/>
<path d="M419 799l5 5M424 799l-5 5M428 799l5 5M433 799l-5 5M419 806l5 5M424 806l-5 5M428 806l5 5M433 806l-5 5" stroke="#c01010" stroke-width="1.800"/><path d="M419 804h14" stroke="#222"/>
<path d="M439.500 794v22" stroke="#8a93a6"/>
<circle cx="449" cy="809" r="3" stroke="#4070c0"/><path d="M451 807l6-5" stroke="#4070c0" stroke-width="1.500"/><circle cx="459" cy="801" r="3.500" fill="#ffee00" stroke="#000"/>
<path d="M471 799l4 4h3l4-4M471 811l4-4h3l4 4M475 803v4M478 803v4" stroke="#000" stroke-width="1.200"/><path d="M470 798h3v3h-3zM480 798h3v3h-3zM470 809h3v3h-3zM480 809h3v3h-3z" fill="#ffee00"/>
<ellipse cx="498" cy="801" rx="4.500" ry="3" stroke="#e8e000" stroke-width="1.600"/><ellipse cx="498" cy="809" rx="5" ry="3.500" stroke="#000" stroke-width="1.200"/>
<ellipse cx="520" cy="801" rx="4.500" ry="3" stroke="#777" stroke-width="1.400"/><ellipse cx="520" cy="809" rx="5" ry="3.500" stroke="#000" stroke-width="1.200"/>
<path d="M533.500 794v22" stroke="#8a93a6"/>
<path d="M541.500 798.500h11v11h-11zM544.500 801.500h11v11h-11zM541.500 798.500l3 3M552.500 798.500l3 3M541.500 809.500l3 3" stroke="#0a20c8" stroke-width="1.200"/>
<path d="M571 798l7 7-7 7-7-7zM571 798v14M564 805h14M567 801l8 8" stroke="#000"/>
<path d="M586 799l7 2 6-2M585 803l7 2 7-2M590 810l3-4 4 4" stroke="#000"/><path d="M585 799l14 12M599 799l-14 12" stroke="#e80000" stroke-width="2"/><circle cx="589" cy="800" r="1.500" fill="#ee0"/><circle cx="596" cy="800" r="1.500" fill="#ee0"/>
<use href="#dn" x="606" y="804"/>
<circle cx="619" cy="810" r="3" fill="#fff" stroke="#000"/><path d="M621 808l3-2" stroke="#000"/><text x="623" y="806" font-family="Liberation Sans" font-weight="bold" font-size="9" fill="#000">Fe</text>
<path d="M638.500 794v22" stroke="#8a93a6"/>
<rect x="646" y="798" width="14" height="14" fill="#eef" stroke="#0a10e0" stroke-width="1.200"/><path d="M653 799l3 3h-6zM653 811l3-3h-6zM647 805l3-3v6zM659 805l-3-3v6z" fill="#000"/><circle cx="653" cy="805" r="1.800" fill="#ffee00" stroke="#000" stroke-width=".5"/>
<use href="#dn" x="667" y="804"/>
<path d="M677.500 794v22" stroke="#8a93a6"/>
<text x="685" y="811" font-family="Liberation Serif" font-style="italic" font-weight="bold" font-size="14" fill="#13209a">M</text>
<rect x="707.500" y="798.500" width="14" height="13" fill="#cfdcf0" stroke="#1a2a90"/><circle cx="713" cy="804" r="3.500" fill="#fff" stroke="#d02020"/><circle cx="716" cy="806" r="3.500" fill="#1a8a88"/>
<path d="M727.500 794v22" stroke="#8a93a6"/>
<path d="M735 802h15M735 809h15M738 798v15M746 798v15" stroke="#a8aab0"/>
<use href="#dn" x="754" y="807"/>
<path d="M795 797v14l3.500-3.500 2.500 5 2-1-2.500-5h5z" fill="#fff" stroke="#000"/>
<path d="M821 797l3 3h-6zM821 813l3-3h-6zM813 805l3-3v6zM829 805l-3-3v6z" fill="#000"/><circle cx="821" cy="805" r="5" stroke="#000" stroke-width="2"/>
<path d="M848 800a5.500 5.500 0 1 0 1.500 2" stroke="#000" stroke-width="2.200"/><path d="M845 797v6l4-3z" fill="#000"/>
<path d="M865 798v14M858 805h14" stroke="#000" stroke-width="2.400"/><path d="M865 796l3.500 4h-7zM865 814l3.500-4h-7zM856 805l4-3.500v7zM874 805l-4-3.500v7z" fill="#000"/>
<path d="M880 799l4 4M892 799l-4 4M880 811l4-4M892 811l-4-4" stroke="#000" stroke-width="1.800"/><rect x="883.500" y="802.500" width="5" height="5" stroke="#000" stroke-width="1.500"/>
<path d="M915 798l-13 7 6 2 7 4" stroke="#000" stroke-width="2.200"/><path d="M908 803l5 3" stroke="#000" stroke-width="1.400"/>
<path d="M930 797l7 7h-4l3 5h2v2h-16v-2h2l3-5h-4z" fill="#fff" stroke="#000" stroke-width="1.500"/>
<circle cx="952" cy="805" r="3.500" fill="#000"/><circle cx="952" cy="805" r="6.500" stroke="#000" stroke-width="1.500" stroke-dasharray="2 1.500"/>
<path d="M970 798h5v4h-5zM970 804h5v5h-5zM968 802h9" stroke="#000" stroke-width="1.500"/><path d="M978 802h2v10h-2zM982 802h2v10h-2z" fill="#bbb" stroke="#888" stroke-width=".6"/>
<path d="M991 798h6v4h-6zM991 804h6v5h-6z" stroke="#000" stroke-width="1.500"/><rect x="997" y="803" width="8" height="8" fill="#888"/>
<use href="#dn" x="1009" y="807"/>
<path d="M1048 813V800M1052 813V800M1056 813V800M1060 813V800M1047 812.500h15" stroke="#000"/>
<path d="M1075 798l-7 13h14z" stroke="#000" stroke-width="1.200"/>
<circle cx="1096" cy="808" r="4.500" stroke="#000" stroke-width="1.200"/><path d="M1098 804l6-6" stroke="#000" stroke-width="2"/><path d="M1093 800l2 3" stroke="#000"/>
<path d="M1112 808l5-8 9-2-2 7-7 6-5 1zM1118 800l1 9" fill="#fff" stroke="#000" stroke-width="1.200"/>
<use href="#dn" x="1133" y="807"/>
</g>

<!-- status icons -->
<path d="M731 823l3-2h5l3 2-5.500 5z" fill="#b8d4f8" stroke="#6a94d8" stroke-width=".6"/><path d="M736 828v3h-3l4 4 4-4h-3v-3z" fill="#ffe800"/>
<path d="M760 834l9-8" stroke="#222" stroke-width="2"/><circle cx="760" cy="832" r="2.500" fill="#e8e020" stroke="#000" stroke-width=".7"/><circle cx="765" cy="828" r="2" fill="#e8e020" stroke="#000" stroke-width=".7"/><path d="M770 822l2 2M773 826l2-1" stroke="#ffe800" stroke-width="1.500"/>
<rect x="886.500" y="821.500" width="13" height="13" fill="#a8b8c8" stroke="#223"/><path d="M893 822l3 3h-6zM893 834l3-3h-6zM887 828l3-3v6zM899 828l-3-3v6z" fill="#10d020"/>
<path d="M1396 827h1M1393 830h1M1396 830h1M1390 833h1M1393 833h1M1396 833h1" stroke="#b0c4d4"/>
</svg>
</body></html>
